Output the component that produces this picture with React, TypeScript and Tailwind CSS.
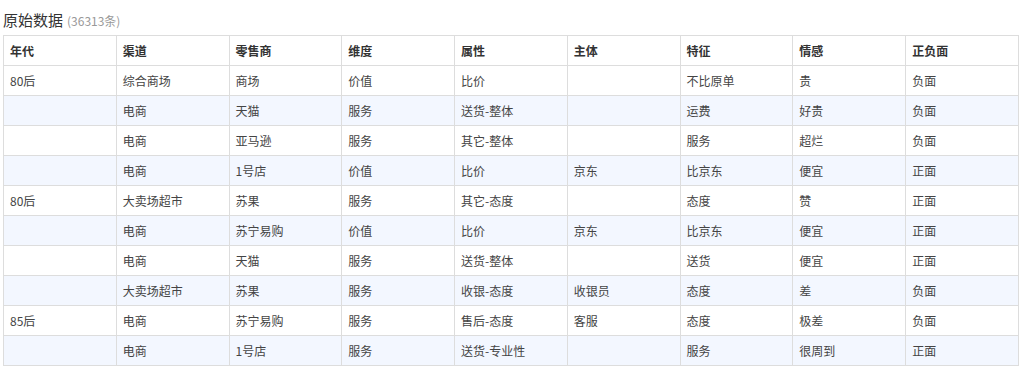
const headers = ["年代", "渠道", "零售商", "维度", "属性", "主体", "特征", "情感", "正负面"];

const rows: string[][] = [
  ["80后", "综合商场", "商场", "价值", "比价", "", "不比原单", "贵", "负面"],
  ["", "电商", "天猫", "服务", "送货-整体", "", "运费", "好贵", "负面"],
  ["", "电商", "亚马逊", "服务", "其它-整体", "", "服务", "超烂", "负面"],
  ["", "电商", "1号店", "价值", "比价", "京东", "比京东", "便宜", "正面"],
  ["80后", "大卖场超市", "苏果", "服务", "其它-态度", "", "态度", "赞", "正面"],
  ["", "电商", "苏宁易购", "价值", "比价", "京东", "比京东", "便宜", "正面"],
  ["", "电商", "天猫", "服务", "送货-整体", "", "送货", "便宜", "正面"],
  ["", "大卖场超市", "苏果", "服务", "收银-态度", "收银员", "态度", "差", "负面"],
  ["85后", "电商", "苏宁易购", "服务", "售后-态度", "客服", "态度", "极差", "负面"],
  ["", "电商", "1号店", "服务", "送货-专业性", "", "服务", "很周到", "正面"],
];

export default function App() {
  return (
    <div className="w-[1020px] h-[367px] overflow-hidden bg-white pl-[3px] pr-px font-['Noto_Sans_CJK_SC','Noto_Sans',sans-serif]">
      <div className="h-[35px] pt-[9px] leading-[20px] text-[#333]">
        <span className="text-[15px]">原始数据</span>
        <span className="ml-[4px] text-[12px] text-[#999]">(36313条)</span>
      </div>
      <table className="w-[1016px] table-fixed border-collapse border border-[#dddddd] text-[12px]">
        <thead>
          <tr className="h-[30px]">
            {headers.map((h) => (
              <th key={h} className="border border-[#dddddd] px-[6px] py-0 text-left font-bold text-[#333]">
                {h}
              </th>
            ))}
          </tr>
        </thead>
        <tbody>
          {rows.map((r, i) => (
            <tr key={i} className={`h-[30px] ${i % 2 === 1 ? "bg-[#f3f7ff]" : "bg-white"}`}>
              {r.map((c, j) => (
                <td key={j} className="border border-[#dddddd] px-[6px] py-0 text-[#444]">
                  {c}
                </td>
              ))}
            </tr>
          ))}
        </tbody>
      </table>
    </div>
  );
}
